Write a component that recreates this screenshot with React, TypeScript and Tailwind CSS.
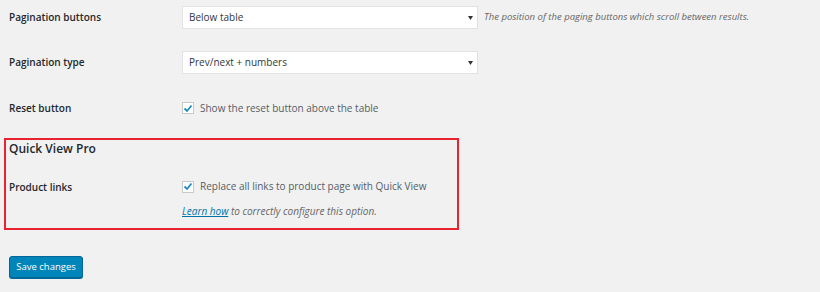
import React from "react";

const font = { fontFamily: '"Open Sans", "Noto Sans", sans-serif' };

function Select({ value }: { value: string }) {
  return (
    <div className="flex h-[23px] w-[296px] items-center justify-between border border-[#e2e2e2] bg-white pl-[6px] pr-[4px] text-[10px] text-[#32373c]">
      <span>{value}</span>
      <svg width="5" height="4" viewBox="0 0 5 4">
        <path d="M0 0 L5 0 L2.5 4 Z" fill="#333" />
      </svg>
    </div>
  );
}

function Check({ label }: { label: string }) {
  return (
    <div className="flex items-center gap-[6px] text-[10px] text-[#555d66]">
      <div className="flex h-[12px] w-[12px] items-center justify-center border border-[#c9c9c9] bg-white">
        <svg width="10" height="9" viewBox="0 0 10 9">
          <path d="M1.5 4.5 L4 7 L8.5 1.5" fill="none" stroke="#1e8cbe" strokeWidth="1.8" />
        </svg>
      </div>
      <span>{label}</span>
    </div>
  );
}

export default function App() {
  return (
    <div className="h-[292px] w-[820px] bg-[#f1f1f1] text-[#23282d]" style={font}>
      <div className="flex h-[35px] items-center pl-[9px]">
        <div className="w-[173px] text-[10px] font-semibold">Pagination buttons</div>
        <Select value="Below table" />
        <div className="ml-[6px] text-[9.5px] italic text-[#666]">
          The position of the paging buttons which scroll between results.
        </div>
      </div>
      <div className="mt-[10px] flex h-[35px] items-center pl-[9px]">
        <div className="w-[173px] text-[10px] font-semibold">Pagination type</div>
        <Select value="Prev/next + numbers" />
      </div>
      <div className="mt-[12px] flex h-[32px] items-center pl-[9px]">
        <div className="w-[173px] text-[10px] font-semibold">Reset button</div>
        <Check label="Show the reset button above the table" />
      </div>
      <div className="ml-[4px] mt-[14px] h-[92px] w-[455px] border-2 border-[#e8232f]">
        <div className="pl-[3px] pt-[0px] text-[12px] font-semibold">Quick View Pro</div>
        <div className="mt-[21px] flex pl-[3px]">
          <div className="w-[173px] pt-[1px] text-[10px] font-semibold">Product links</div>
          <div className="flex flex-col">
            <Check label="Replace all links to product page with Quick View" />
            <div className="mt-[10px] text-[10px] italic text-[#666]">
              <span className="text-[#0073aa] underline">Learn how</span> to correctly configure this option.
            </div>
          </div>
        </div>
      </div>
      <div className="pl-[9px] pt-[22px]">
        <button className="h-[22px] w-[74px] rounded-[3px] border border-[#006799] bg-[#0085ba] text-[9.5px] text-white shadow-[0_1px_0_#006799]">
          Save changes
        </button>
      </div>
    </div>
  );
}
